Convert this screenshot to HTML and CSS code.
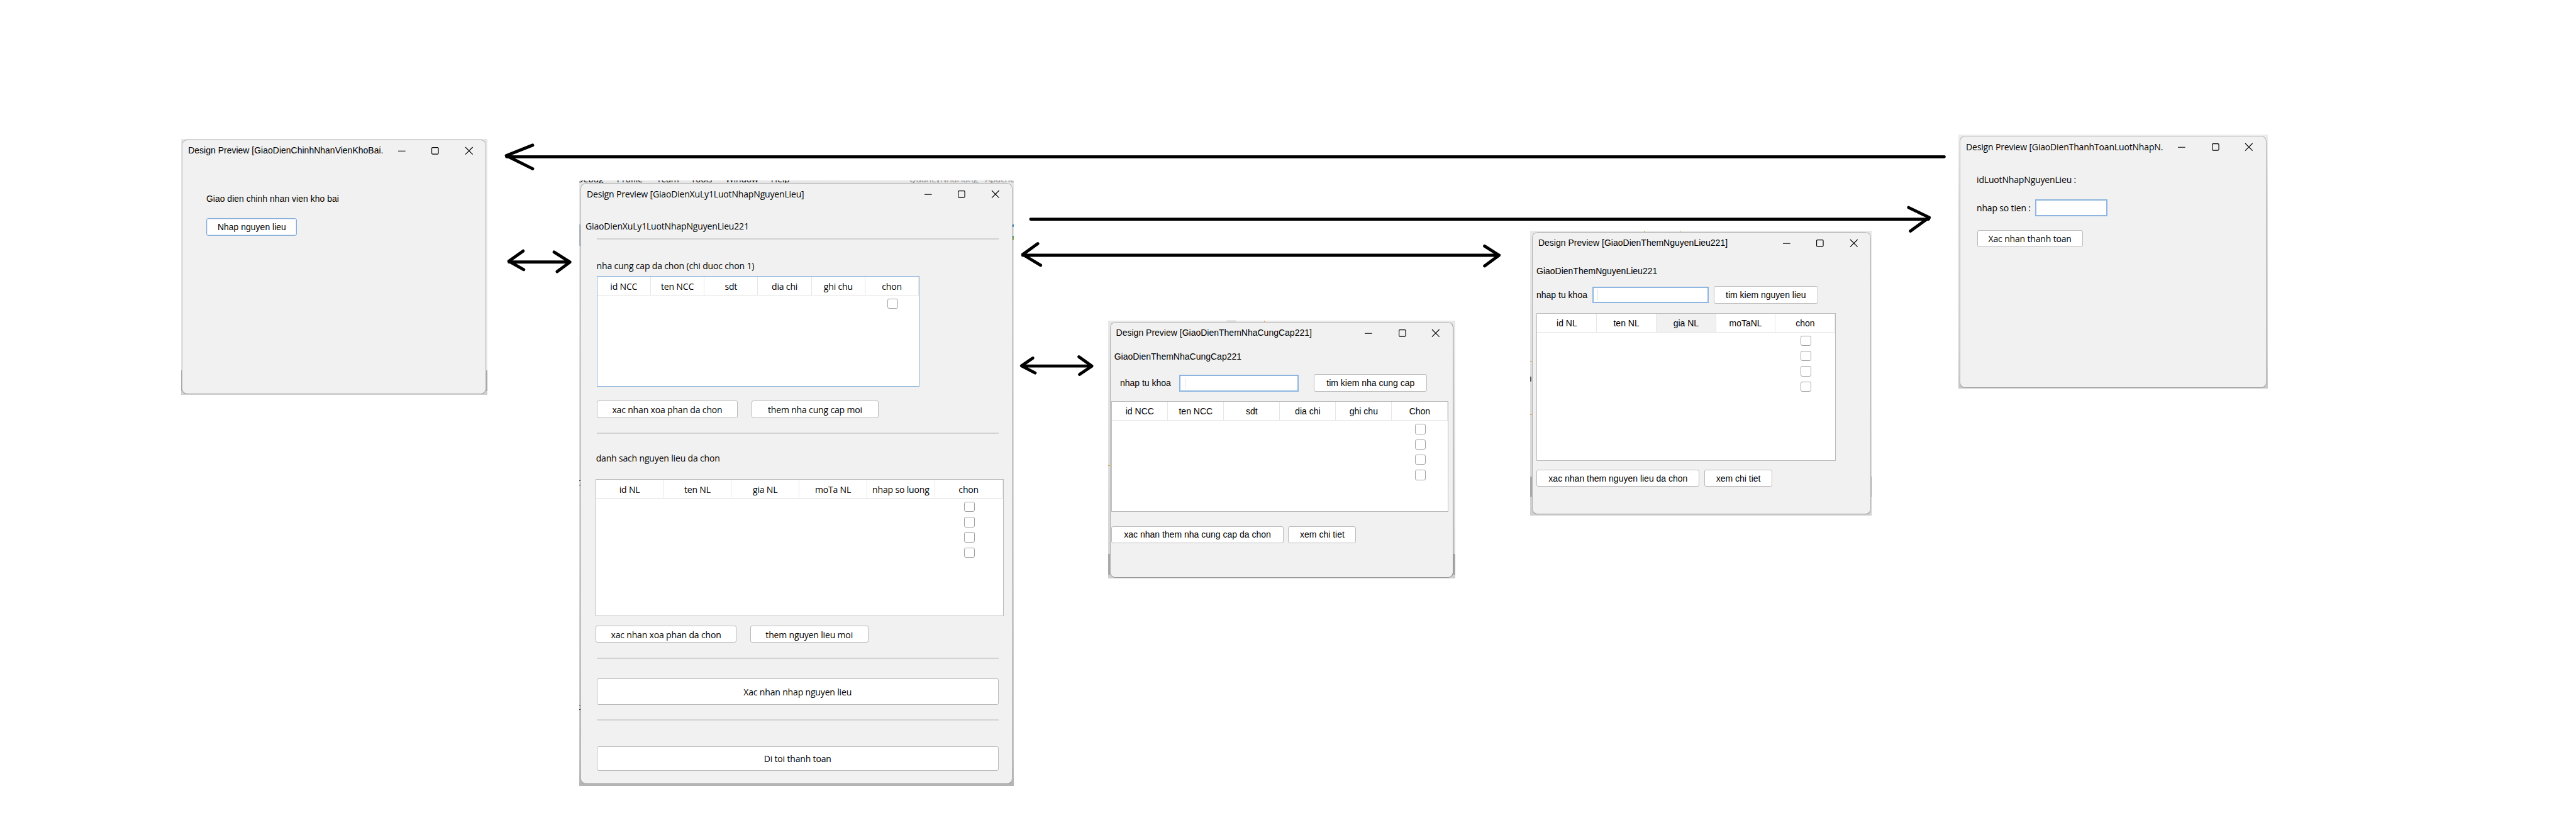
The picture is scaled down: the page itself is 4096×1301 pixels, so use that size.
FILE: index.html
```html
<!DOCTYPE html>
<html lang="vi">
<head>
<meta charset="utf-8">
<title>Design Preview</title>
<link rel="stylesheet" href="styles.css">
</head>
<body>
<svg class="defs" width="0" height="0" aria-hidden="true">
  <symbol id="min" viewBox="0 0 14 14"><path d="M1 7.5H13"/></symbol>
  <symbol id="max" viewBox="0 0 14 14"><rect x="1.6" y="1.6" width="10.8" height="10.8" rx="1.5"/></symbol>
  <symbol id="close" viewBox="0 0 14 14"><path d="M1 1L13 13M13 1L1 13"/></symbol>
</svg>
<main class="board">

  <section class="shot shot-main">
    <div class="win">
      <header class="bar"><span class="title">Design Preview [GiaoDienChinhNhanVienKhoBai.</span><svg><use href="#min"/></svg><svg><use href="#max"/></svg><svg><use href="#close"/></svg></header>
      <p class="text">Giao dien chinh nhan vien kho bai</p>
      <button class="btn focus">Nhap nguyen lieu</button>
    </div>
  </section>

  <section class="shot shot-import segoe">
    <div class="menu"><span class="m1">Debug</span><span class="m2">Profile</span><span class="m3">Team</span><span class="m4">Tools</span><span class="m5">Window</span><span class="m6">Help</span><span class="m7">QuanLyNhaHang</span><span class="m8">Apache</span></div>
    <div class="win">
      <header class="bar"><span class="title">Design Preview [GiaoDienXuLy1LuotNhapNguyenLieu]</span><svg><use href="#min"/></svg><svg><use href="#max"/></svg><svg><use href="#close"/></svg></header>
      <p class="text heading">GiaoDienXuLy1LuotNhapNguyenLieu221</p>
      <hr class="sep sep-a">
      <p class="text supplier">nha cung cap da chon (chi duoc chon 1)</p>
      <div class="table suppliers focus">
        <div class="head"><span>id NCC</span><span>ten NCC</span><span>sdt</span><span>dia chi</span><span>ghi chu</span><span>chon</span></div>
        <div class="checks"><i></i></div>
      </div>
      <div class="row supplier-actions"><button class="btn wide">xac nhan xoa phan da chon</button><button class="btn add">them nha cung cap moi</button></div>
      <hr class="sep sep-b">
      <p class="text materials-label">danh sach nguyen lieu da chon</p>
      <div class="table materials">
        <div class="head"><span>id NL</span><span>ten NL</span><span>gia NL</span><span>moTa NL</span><span>nhap so luong</span><span>chon</span></div>
        <div class="checks"><i></i><i></i><i></i><i></i></div>
      </div>
      <div class="row material-actions"><button class="btn wide">xac nhan xoa phan da chon</button><button class="btn add">them nguyen lieu moi</button></div>
      <hr class="sep sep-c">
      <button class="btn confirm">Xac nhan nhap nguyen lieu</button>
      <hr class="sep sep-d">
      <button class="btn pay">Di toi thanh toan</button>
    </div>
  </section>

  <section class="shot shot-supplier">
    <div class="win">
      <header class="bar"><span class="title">Design Preview [GiaoDienThemNhaCungCap221]</span><svg><use href="#min"/></svg><svg><use href="#max"/></svg><svg><use href="#close"/></svg></header>
      <p class="text">GiaoDienThemNhaCungCap221</p>
      <div class="row search"><span class="label">nhap tu khoa</span><div class="field"></div><button class="btn find">tim kiem nha cung cap</button></div>
      <div class="table">
        <div class="head"><span>id NCC</span><span>ten NCC</span><span>sdt</span><span>dia chi</span><span>ghi chu</span><span>Chon</span></div>
        <div class="checks"><i></i><i></i><i></i><i></i></div>
      </div>
      <div class="row actions"><button class="btn ok">xac nhan them nha cung cap da chon</button><button class="btn detail">xem chi tiet</button></div>
    </div>
  </section>

  <section class="shot shot-material">
    <div class="win">
      <header class="bar"><span class="title">Design Preview [GiaoDienThemNguyenLieu221]</span><svg><use href="#min"/></svg><svg><use href="#max"/></svg><svg><use href="#close"/></svg></header>
      <p class="text">GiaoDienThemNguyenLieu221</p>
      <div class="row search"><span class="label">nhap tu khoa</span><div class="field"></div><button class="btn find">tim kiem nguyen lieu</button></div>
      <div class="table">
        <div class="head"><span>id NL</span><span>ten NL</span><span class="hover">gia NL</span><span>moTaNL</span><span>chon</span></div>
        <div class="checks"><i></i><i></i><i></i><i></i></div>
      </div>
      <div class="row actions"><button class="btn ok">xac nhan them nguyen lieu da chon</button><button class="btn detail">xem chi tiet</button></div>
    </div>
  </section>

  <section class="shot shot-payment segoe">
    <div class="win">
      <header class="bar"><span class="title">Design Preview [GiaoDienThanhToanLuotNhapN.</span><svg><use href="#min"/></svg><svg><use href="#max"/></svg><svg><use href="#close"/></svg></header>
      <p class="text">idLuotNhapNguyenLieu :</p>
      <div class="row search"><span class="label">nhap so tien :</span><div class="field"></div></div>
      <button class="btn confirm">Xac nhan thanh toan</button>
    </div>
  </section>

  <svg class="arrows" viewBox="0 0 4210 1337">
    <path d="M3177.5 256.3H828M870.5 237.3L827.500 254.5L870.5 275.8"/>
    <path d="M832 428.3H931M855 410.3L831.500 427L856 440.700M905.500 412L931.500 428.500L910.500 444"/>
    <path d="M1684.500 358.300H3152M3119.300 339.300L3153 355.500L3122.300 377.700M3150 357.500L3153 356"/>
    <path d="M1671.500 417.300H2450M1696 398.300L1671.500 416L1700.700 433.700M2426.300 402.300L2450 417.300L2426.300 434.700"/>
    <path d="M1670 598.300H1784M1688 585.300L1669.500 598L1691.700 609.700M1763.300 583.300L1784.500 598.500L1764.300 612"/>
  </svg>
</main>
</body>
</html>
```
FILE: styles.css
```css
* { box-sizing: border-box; }

html, body {
  margin: 0;
  background: #fff;
  overflow: hidden;
}

.defs { position: absolute; }

.board {
  position: relative;
  width: 4210px;
  height: 1337px;
  zoom: 0.97292;
  overflow: hidden;
  color: #000;
  font: 14.4px/20px "Liberation Sans", Arial, sans-serif;
}

.segoe {
  font-family: "Open Sans", "Noto Sans", sans-serif;
  letter-spacing: -0.17px;
}

/* Captured windows, pinned on the free canvas */
.shot {
  position: absolute;
  padding: 1.5px 2px;
  background: linear-gradient(#ececec, #dcdcdc 30%, #d4d4d4 85%, #c8c8c8);
}

.shot-main {
  left: 296.5px; top: 227px; width: 500.5px; height: 418px;
  padding: 1px 2px 1px 1px;
  background: linear-gradient(#e6e6e6 378px, #a9a9a9 378px 412px, #d0d0d0 412px);
}
.shot-import {
  left: 947px; top: 295px; width: 710px; height: 990px;
  padding: 4px 2px 3px;
  background:
    linear-gradient(#a9b7c4, #a9b7c4) 0 72px / 2px 35px no-repeat,
    linear-gradient(#3a78b5, #3a78b5) 100% 72px / 3px 4px no-repeat,
    linear-gradient(#2d9a86, #a8a030) 100% 90px / 2px 7px no-repeat,
    linear-gradient(#222, #222) 0 490px / 2px 1px no-repeat,
    linear-gradient(#222, #222) 0 497px / 2px 1px no-repeat,
    linear-gradient(#222, #222) 0 857px / 2px 1px no-repeat,
    linear-gradient(#222, #222) 0 864px / 2px 1px no-repeat,
    linear-gradient(#e6e6e6, #d6d6d6 60%, #c4c4c4 95%, #b4b4b4);
}
.shot-supplier {
  left: 1811px; top: 524px; width: 567px; height: 422px;
  padding: 2px 3px 1px 3px;
  background:
    linear-gradient(#999, #999) 193px 0 / 16px 1px no-repeat,
    linear-gradient(#e59a2c, #e59a2c) 255px 0 / 1px 2px no-repeat,
    linear-gradient(#e59a2c, #e59a2c) 0 237px / 3px 1px no-repeat,
    linear-gradient(#e8e8e8, #d6d6d6 381px, #a9a9a9 381px 415px, #d0d0d0 415px);
}
.shot-material {
  left: 2501px; top: 377px; width: 558px; height: 466px;
  padding: 2px 1px 2px 3px;
  background:
    linear-gradient(#e59a2c, #e59a2c) 186px 0 / 1px 2px no-repeat,
    linear-gradient(#e59a2c, #e59a2c) 244px 0 / 1px 2px no-repeat,
    linear-gradient(#e59a2c, #e59a2c) 0 213px / 3px 1px no-repeat,
    linear-gradient(#555, #555) 0 239px / 2px 8px no-repeat,
    linear-gradient(#e59a2c, #e59a2c) 0 300px / 3px 1px no-repeat,
    linear-gradient(#e8e8e8, #d6d6d6 402px, #a9a9a9 402px 435px, #d0d0d0 435px);
}
.shot-payment {
  left: 3201px; top: 220px; width: 505px; height: 415px;
  padding: 2px 2px 1px;
}

.win {
  display: flex;
  flex-direction: column;
  align-items: flex-start;
  height: 100%;
  border: 1px solid #b2b2b2;
  border-bottom-color: #999;
  border-radius: 9px;
  background: #f1f1f1;
}
.shot-supplier .win { border-right-color: #888; }

.bar {
  display: flex;
  align-items: center;
  align-self: stretch;
  flex: none;
  height: 35px;
  padding-left: 9px;
}
.title { flex: 1; white-space: nowrap; }
.bar svg {
  flex: none;
  width: 14px;
  height: 14px;
  margin: 0 20.5px;
  fill: none;
  stroke: #000;
  stroke-width: 1.2;
}

.text {
  flex: none;
  margin: 0;
  height: 20px;
  line-height: 21px;
  white-space: nowrap;
}
.row { display: flex; flex: none; align-items: center; }
.label { padding-top: 1px; }

.btn {
  flex: none;
  height: 28px;
  padding: 1px 0 0;
  border: 1px solid #bababa;
  border-radius: 3px;
  background: #fff;
  color: inherit;
  font: inherit;
  letter-spacing: inherit;
  white-space: nowrap;
}
.btn.focus { border-color: #87afda; box-shadow: inset 0 0 0 1px #dbe8f5; }

.field {
  height: 27.5px;
  padding: 3px 7px;
  border: 2.1px solid #8db5df;
  background: #fff;
}
.field::before {
  content: "";
  display: block;
  width: 1px;
  height: 18px;
  background: #e3e3e3;
}
.shot-payment .field::before { display: none; }

.table {
  flex: none;
  border: 1px solid #bababa;
  background: #fff;
}
.table.focus { border-color: #87afda; }
.head {
  display: grid;
  grid-auto-flow: column;
  grid-auto-columns: minmax(0, 1fr);
  height: 31px;
  border-bottom: 1px solid #e4e4e4;
}
.head span {
  border-right: 1px solid #e6e6e6;
  height: 30px;
  line-height: 32px;
  text-align: center;
  white-space: nowrap;
}
.head .hover { background: #f1f1f1; }
.checks {
  display: flex;
  flex-direction: column;
  gap: 8px;
  width: calc(100% / 6);
  margin-left: auto;
  padding: 5px 0 0 2px;
  align-items: center;
}
.checks i {
  width: 17.500px;
  height: 17px;
  border: 1px solid #a2a2a2;
  border-radius: 3px;
}

/* Main staff window */
.shot-main .text { margin: 51px 0 0 38.500px; }
.shot-main .btn { width: 148px; margin: 22px 0 0 39px; }

/* Import window */
.menu {
  position: absolute;
  inset: 0 0 auto 0;
  height: 4px;
  overflow: hidden;
  line-height: 20px;
}
.menu span { position: absolute; top: -12px; }
.m1 { left: -4px; }
.m2 { left: 61px; }
.m3 { left: 126px; }
.m4 { left: 182px; }
.m5 { left: 239px; }
.m6 { left: 313px; }
.m7 { left: 539px; color: #888; }
.m8 { left: 663px; color: #888; }

.heading { margin: 25px 0 0 7px; }
.sep {
  flex: none;
  width: 657px;
  height: 2px;
  margin: 0 0 0 25px;
  border: 0;
  background: #d3d3d3;
}
.sep-a { margin-top: 10px; }
.supplier { margin: 33px 0 0 25px; }
.suppliers { width: 528px; height: 181.500px; margin: 6px 0 0 25px; }
.supplier-actions { gap: 22px; margin: 22.500px 0 0 25px; }
.supplier-actions .btn { height: 28.500px; }
.wide { width: 231px; }
.supplier-actions .add { width: 208px; }
.sep-b { height: 1.500px; margin-top: 24px; }
.materials-label { margin: 30.500px 0 0 24px; }
.materials { width: 667px; height: 224.500px; margin: 23.500px 0 0 23px; }
.material-actions { gap: 22px; margin: 15.500px 0 0 23px; }
.material-actions .add { width: 193px; }
.sep-c { margin-top: 24px; }
.shot-import .confirm { width: 657px; height: 43.500px; margin: 32px 0 0 25px; }
.sep-d { margin-top: 23.500px; }
.pay { width: 657px; height: 40.500px; margin: 42px 0 0 25px; }

/* Add-supplier window */
.shot-supplier .text { margin: 10px 0 0 6px; }
.shot-supplier .search { margin: 20px 0 0 15.500px; }
.shot-supplier .label { width: 97px; }
.shot-supplier .field { width: 195px; }
.shot-supplier .find { width: 185px; height: 28.500px; margin-left: 25px; }
.shot-supplier .table { width: 551px; height: 181px; margin: 15.500px 0 0 1.500px; }
.shot-supplier .actions { gap: 8px; margin: 23px 0 0 1.500px; }
.shot-supplier .ok { width: 281px; }
.detail { width: 111px; }

/* Add-material window */
.shot-material .text { margin: 18px 0 0 6px; }
.shot-material .search { margin: 15px 0 0 6px; }
.shot-material .label { width: 91px; }
.shot-material .field { width: 191px; }
.shot-material .find { width: 170px; margin-left: 8px; }
.shot-material .table { width: 489px; height: 241.500px; margin: 15.500px 0 0 6.500px; }
.shot-material .checks { width: 20%; }
.shot-material .actions { gap: 8px; margin: 15px 0 0 6.500px; }
.shot-material .ok { width: 266px; }

/* Payment window */
.shot-payment .text { margin: 26px 0 0 26.500px; }
.shot-payment .search { margin: 22px 0 0 26.500px; }
.shot-payment .label { width: 95.500px; }
.shot-payment .field { width: 118px; }
.shot-payment .confirm { width: 173px; margin: 22.500px 0 0 27px; }

/* Navigation arrows between windows */
.arrows {
  position: absolute;
  inset: 0;
  width: 4210px;
  height: 1337px;
  fill: none;
  stroke: #000;
  stroke-width: 5;
  stroke-linecap: round;
  stroke-linejoin: round;
}
```
